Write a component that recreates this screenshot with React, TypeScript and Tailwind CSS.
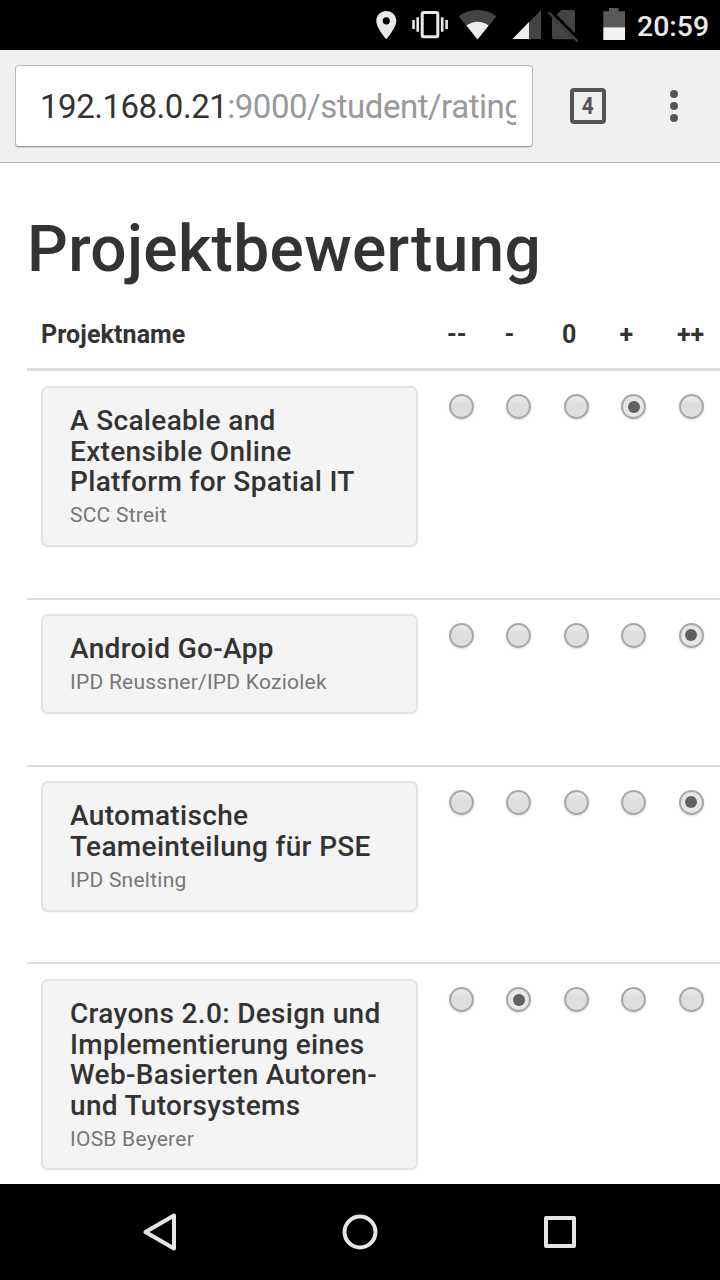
const ratings = ["--", "-", "0", "+", "++"];

type Project = {
  title: string[];
  institute: string;
  rating: number;
  rowClass: string;
  cardClass: string;
};

const projects: Project[] = [
  {
    title: ["A Scaleable and", "Extensible Online", "Platform for Spatial IT"],
    institute: "SCC Streit",
    rating: 3,
    rowClass: "h-[226.5px]",
    cardClass: "h-[161.5px]",
  },
  {
    title: ["Android Go-App"],
    institute: "IPD Reussner/IPD Koziolek",
    rating: 4,
    rowClass: "h-[167px] border-t-2",
    cardClass: "h-[100px]",
  },
  {
    title: ["Automatische", "Teameinteilung für PSE"],
    institute: "IPD Snelting",
    rating: 4,
    rowClass: "h-[197.5px] border-t-2",
    cardClass: "h-[130.5px]",
  },
  {
    title: ["Crayons 2.0: Design und", "Implementierung eines", "Web-Basierten Autoren-", "und Tutorsystems"],
    institute: "IOSB Beyerer",
    rating: 1,
    rowClass: "h-[222px] border-t-2",
    cardClass: "h-[191.5px]",
  },
];

function StatusBar() {
  return (
    <header className="flex h-[50px] shrink-0 bg-black">
      <svg className="ml-[360px] shrink-0" width="272" height="50" viewBox="0 0 272 50" fill="none">
        <path
          fillRule="evenodd"
          fill="#e9e9e9"
          d="M26.3 11c-5.6 0-10 4.3-10 9.8 0 7.4 10 18.5 10 18.5s10-11.1 10-18.5c0-5.500-4.400-9.800-10-9.800zm0 6.200a3.600 3.600 0 1 1 0 7.200 3.600 3.600 0 0 1 0-7.200z"
        />
        <rect x="62.200" y="12.500" width="15.600" height="24.300" rx="1.500" stroke="#e9e9e9" strokeWidth="3" />
        <path d="M53.500 20v9M57.700 17.300v14.400M82.200 17.300v14.400M86.600 20v9" stroke="#e9e9e9" strokeWidth="2.600" />
        <path fill="#444" d="M98.800 16.200C109 8 126 8 136.400 16.200L117.500 39.500z" />
        <path fill="#ededed" d="M106.500 25.500c6.300-5.100 15.800-5.100 22.200 0L117.500 39.500z" />
        <path fill="#444" d="M181 10.300V39h-28.500z" />
        <path fill="#ededed" d="M169 22v17h-16.500z" />
        <path
          fill="#444"
          d="M201.500 10h11.300q2.200 0 2.200 2.200v21L196.700 14.600zM192 17.200L213.800 39.200H194.200q-2.200 0-2.200-2.200z"
        />
        <path stroke="#444" strokeWidth="2.200" d="M188.500 12.200l29 29" />
        <path fill="#5a5a5a" d="M249 8h9.500v3.200h6.500V27.500h-21.700V11.200h5.700z" />
        <path fill="#f2f2f2" d="M243.300 27.300H265V40h-21.700z" />
      </svg>
      <span className="ml-[5px] text-[28.4px] font-medium leading-[53px] text-[#e9e9e9]">20:59</span>
    </header>
  );
}

function BrowserToolbar() {
  return (
    <div className="flex h-[113px] shrink-0 items-start border-b border-[#b9b9b9] bg-[#f0f0f0] pl-[15px] pt-[15px]">
      <div className="h-[82px] w-[518px] shrink-0 rounded-[4px] border border-[#b8b8b8] border-b-[#9c9c9c] bg-white pl-[24px] pr-4 shadow-[0_1px_1px_rgba(0,0,0,0.12)]">
        <div className="overflow-hidden whitespace-nowrap text-[33px] leading-[82px] tracking-[-0.480px] text-[#333]">
          192.168.0.21<span className="text-[#999]">:9000/student/rating</span>
        </div>
      </div>
      <div className="ml-[37px] mt-[23px] flex size-9 items-center justify-center rounded-[4px] border-4 border-[#555] text-[23px] font-bold leading-none text-[#555]">
        <span className="scale-x-90">4</span>
      </div>
      <div className="ml-[64px] mt-[25px] flex flex-col gap-1">
        <i className="size-2 rounded-full bg-[#555]" />
        <i className="size-2 rounded-full bg-[#555]" />
        <i className="size-2 rounded-full bg-[#555]" />
      </div>
    </div>
  );
}

function Radio({ checked }: { checked: boolean }) {
  return (
    <span
      role="radio"
      aria-checked={checked}
      className={
        "flex size-[25px] shrink-0 items-center justify-center rounded-full border-2 border-[#a8a8a8] shadow-[0_1px_2px_rgba(0,0,0,0.15)] " +
        (checked ? "bg-[#e6e6e6]" : "bg-linear-to-b from-[#ececec] to-[#dedede] to-40%")
      }
    >
      {checked && <span className="size-3 rounded-full bg-[#606060]" />}
    </span>
  );
}

function ProjectRow({ project }: { project: Project }) {
  return (
    <div className={"flex shrink-0 items-start border-[#ddd] pl-[14px] " + project.rowClass}>
      <div
        className={
          "mt-[14.500px] w-[377px] shrink-0 rounded-[7px] border-2 border-[#e3e3e3] bg-[#f4f4f4] pl-[27px] pt-[18.300px] shadow-[0_1px_1px_rgba(0,0,0,0.04)] " +
          project.cardClass
        }
      >
        <h4 className="whitespace-nowrap text-[28px] font-medium leading-[30.7px] tracking-[0.330px] text-[#333]">
          {project.title.map((line) => (
            <span key={line} className="block">
              {line}
            </span>
          ))}
        </h4>
        <p className="mt-[2px] text-[21px] leading-[30px] tracking-[0.240px] text-[#777]">{project.institute}</p>
      </div>
      <div role="radiogroup" className="ml-[30.600px] mt-[23.400px] flex gap-[32.5px]">
        {ratings.map((label, i) => (
          <Radio key={label} checked={i === project.rating} />
        ))}
      </div>
    </div>
  );
}

export default function App() {
  return (
    <div className="flex h-[1280px] w-[720px] flex-col overflow-hidden bg-white font-[Roboto,sans-serif]">
      <StatusBar />
      <BrowserToolbar />
      <main className="flex min-h-0 flex-1 flex-col overflow-hidden pl-[27px] pt-[52px]">
        <h1 className="shrink-0 text-[64px] font-medium leading-[70px] tracking-[0.320px] text-[#333]">Projektbewertung</h1>
        <div className="mt-[12px] flex h-[74px] shrink-0 items-start border-b-[3.500px] border-[#ddd] pl-[14px] pt-[20px] text-[25px] font-bold leading-[36px] text-[#333]">
          <span className="w-[406px] tracking-[0.100px]">Projektname</span>
          <span className="w-[57.500px]">--</span>
          <span className="w-[57.500px]">-</span>
          <span className="w-[57.500px]">0</span>
          <span className="w-[57.500px]">+</span>
          <span>++</span>
        </div>
        {projects.map((project) => (
          <ProjectRow key={project.institute} project={project} />
        ))}
      </main>
      <nav className="flex h-24 shrink-0 items-center bg-black">
        <svg width="720" height="96" viewBox="0 0 720 96" fill="none" stroke="#e6e6e6" strokeWidth="4" strokeLinejoin="round">
          <path d="M174 31.500v33L145.500 48z" />
          <circle cx="360" cy="48" r="15.500" />
          <rect x="546" y="34" width="28" height="28" />
        </svg>
      </nav>
    </div>
  );
}
